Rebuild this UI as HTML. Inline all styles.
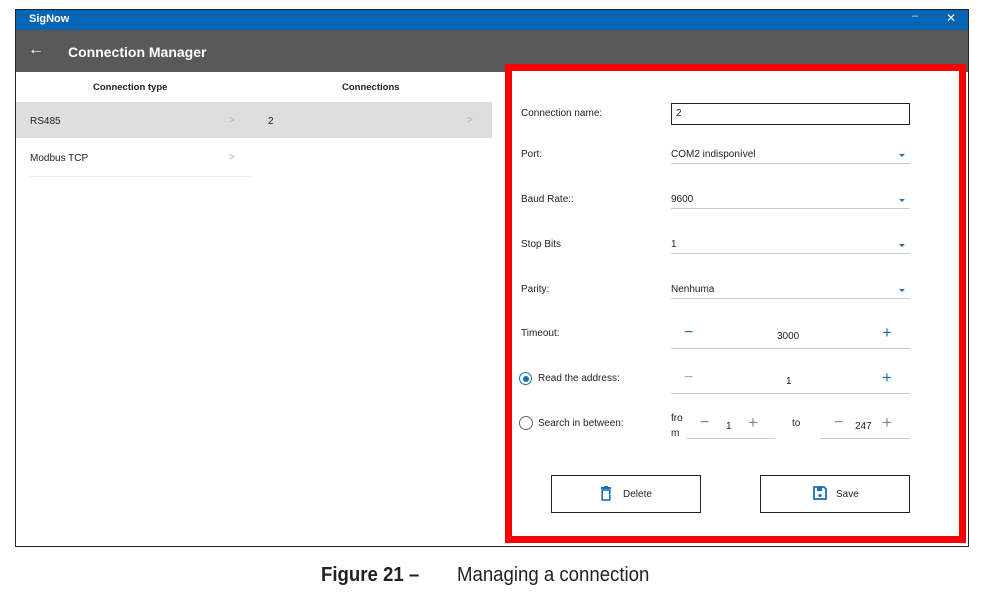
<!DOCTYPE html>
<html><head><meta charset="utf-8"><style>
*{margin:0;padding:0;box-sizing:border-box}
body{width:1008px;height:595px;background:#fff;font-family:"Liberation Sans",sans-serif;position:relative;overflow:hidden;color:#222}
.a{position:absolute}
.win{left:15px;top:9px;width:954px;height:538px;border:1px solid #222;background:#fff}
.t{font-size:10px}
.ln{height:1px;background:#ccc}
.blu{color:#1a6fb5}
.dd{width:0;height:0;border-left:3px solid transparent;border-right:3px solid transparent;border-top:3px solid #1a6fb5}
.btn{border:1px solid #222;background:#fff;font-size:10px}
</style></head><body>
<div class="a win"></div>
<div class="a" style="left:16px;top:10px;width:952px;height:20px;background:#0565b5"></div>
<div class="a" style="left:29px;top:13px;font-size:11px;font-weight:bold;color:#fff">SigNow</div>
<div class="a" style="left:912px;top:10px;color:#cfe0f2;font-size:11px">–</div>
<div class="a" style="left:946px;top:11px;color:#fff;font-size:12px">✕</div>
<div class="a" style="left:16px;top:30px;width:952px;height:42px;background:#595959"></div>
<div class="a" style="left:28px;top:41px;color:#fff;font-size:16px;font-weight:bold">←</div>
<div class="a" style="left:68px;top:44px;color:#fff;font-size:14px;font-weight:bold">Connection Manager</div>
<div class="a t" style="left:93px;top:82px;font-weight:bold;font-size:9.5px">Connection type</div>
<div class="a t" style="left:342px;top:82px;font-weight:bold;font-size:9.5px">Connections</div>
<div class="a" style="left:16px;top:102px;width:476px;height:36px;background:#dedede"></div>
<div class="a t" style="left:30px;top:116px">RS485</div>
<div class="a t" style="left:229px;top:115px;color:#aaa">&gt;</div>
<div class="a t" style="left:268px;top:116px">2</div>
<div class="a t" style="left:467px;top:115px;color:#aaa">&gt;</div>
<div class="a t" style="left:30px;top:153px">Modbus TCP</div>
<div class="a t" style="left:229px;top:152px;color:#aaa">&gt;</div>
<div class="a ln" style="left:30px;top:176px;width:223px;background:#eee"></div>
<div class="a" style="left:505px;top:64px;width:461px;height:479px;border:7px solid #f00;background:#fff"></div>
<div class="a t" style="left:521px;top:108px">Connection name:</div>
<div class="a" style="left:671px;top:103px;width:239px;height:22px;border:1px solid #222"></div>
<div class="a t" style="left:676px;top:108px">2</div>
<div class="a t" style="left:521px;top:149px">Port:</div>
<div class="a t" style="left:671px;top:149px">COM2 indisponível</div>
<div class="a dd" style="left:899px;top:154px"></div>
<div class="a ln" style="left:671px;top:163px;width:239px"></div>
<div class="a t" style="left:521px;top:194px">Baud Rate::</div>
<div class="a t" style="left:671px;top:194px">9600</div>
<div class="a dd" style="left:899px;top:199px"></div>
<div class="a ln" style="left:671px;top:208px;width:239px"></div>
<div class="a t" style="left:521px;top:239px">Stop Bits</div>
<div class="a t" style="left:671px;top:239px">1</div>
<div class="a dd" style="left:899px;top:244px"></div>
<div class="a ln" style="left:671px;top:253px;width:239px"></div>
<div class="a t" style="left:521px;top:284px">Parity:</div>
<div class="a t" style="left:671px;top:284px">Nenhuma</div>
<div class="a dd" style="left:899px;top:289px"></div>
<div class="a ln" style="left:671px;top:298px;width:239px"></div>
<div class="a t" style="left:521px;top:328px">Timeout:</div>
<div class="a blu" style="left:684px;top:324px;font-size:16px">−</div>
<div class="a t" style="left:777px;top:331px">3000</div>
<div class="a blu" style="left:882px;top:323px;font-size:17px">+</div>
<div class="a ln" style="left:671px;top:348px;width:239px"></div>
<div class="a" style="left:519px;top:372px;width:13px;height:13px;border:1.5px solid #1a6fb5;border-radius:50%"></div>
<div class="a" style="left:522.5px;top:375.5px;width:6px;height:6px;background:#1a6fb5;border-radius:50%"></div>
<div class="a t" style="left:538px;top:373px">Read the address:</div>
<div class="a" style="left:684px;top:369px;font-size:16px;color:#aaa">−</div>
<div class="a t" style="left:786px;top:376px">1</div>
<div class="a blu" style="left:882px;top:368px;font-size:17px">+</div>
<div class="a ln" style="left:671px;top:393px;width:239px"></div>
<div class="a" style="left:519px;top:416px;width:14px;height:14px;border:1.5px solid #666;border-radius:50%"></div>
<div class="a t" style="left:538px;top:418px">Search in between:</div>
<div class="a t" style="left:671px;top:411px;line-height:15px">fro<br>m</div>
<div class="a" style="left:700px;top:414px;font-size:16px;color:#888">−</div>
<div class="a t" style="left:726px;top:421px">1</div>
<div class="a" style="left:748px;top:413px;font-size:17px;color:#888">+</div>
<div class="a ln" style="left:686px;top:438px;width:89px"></div>
<div class="a t" style="left:792px;top:418px">to</div>
<div class="a" style="left:834px;top:414px;font-size:16px;color:#888">−</div>
<div class="a t" style="left:855px;top:421px">247</div>
<div class="a" style="left:882px;top:413px;font-size:17px;color:#888">+</div>
<div class="a ln" style="left:820px;top:438px;width:90px"></div>
<div class="a btn" style="left:551px;top:475px;width:150px;height:38px"></div>
<svg class="a" style="left:600px;top:486px" width="12" height="15" viewBox="0 0 12 15"><rect x="1" y="1" width="10" height="2" fill="#1a6fb5"/><rect x="4" y="0" width="4" height="2" fill="#1a6fb5"/><rect x="2.2" y="4" width="7.6" height="10" fill="none" stroke="#1a6fb5" stroke-width="1.6"/></svg>
<div class="a t" style="left:623px;top:489px">Delete</div>
<div class="a btn" style="left:760px;top:475px;width:150px;height:38px"></div>
<svg class="a" style="left:813px;top:486px" width="14" height="14" viewBox="0 0 14 14"><path d="M1 1H11L13 3V13H1Z" fill="none" stroke="#1a6fb5" stroke-width="1.8"/><rect x="4" y="1" width="5" height="4" fill="#1a6fb5"/><circle cx="7" cy="9.5" r="1.6" fill="#1a6fb5"/></svg>
<div class="a t" style="left:836px;top:489px">Save</div>
<div class="a" style="left:321px;top:564px;font-size:20px;font-weight:bold;transform:scaleX(0.93);transform-origin:left;white-space:nowrap">Figure 21 –</div>
<div class="a" style="left:457px;top:564px;font-size:20px;transform:scaleX(0.93);transform-origin:left;white-space:nowrap">Managing a connection</div>
</body></html>
